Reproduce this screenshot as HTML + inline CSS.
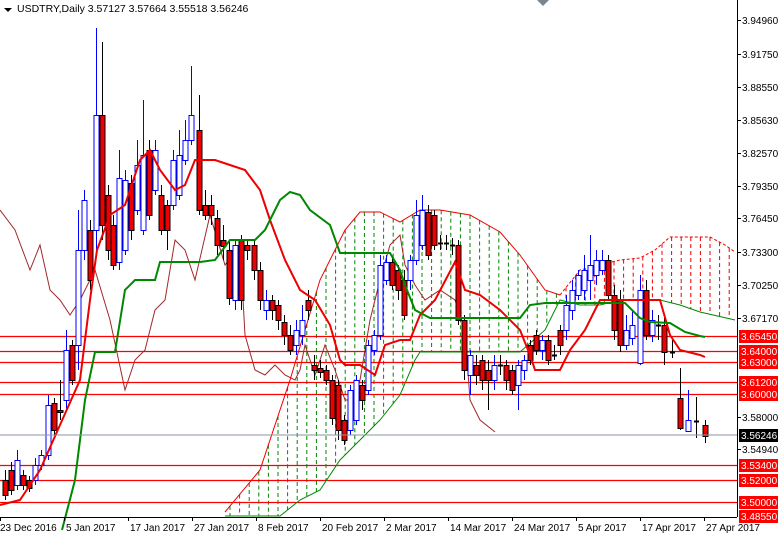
<!DOCTYPE html>
<html><head><meta charset="utf-8"><style>
html,body{margin:0;padding:0;background:#fff;width:778px;height:534px;overflow:hidden}
svg{display:block;font-family:"Liberation Sans",sans-serif}
</style></head><body>
<svg id="s" width="778" height="534" viewBox="0 0 778 534" xmlns="http://www.w3.org/2000/svg">
<rect width="778" height="534" fill="#fff"/>
<g id="cloud"></g>
<g id="hl"></g>
<polyline id="chik" fill="none" stroke="#a0282a" stroke-width="1" points="0,210 15,230 30,270 40,245 50,290 60,300 70,315 80,300 95,270 110,320 125,390 135,360 145,350 155,310 165,300 175,240 185,250 195,280 210,215 225,265 240,245 245,335 255,370 265,375 275,365 285,375 295,380 300,370 305,345 315,375 325,345 335,370 345,400 355,400 360,380 370,320 380,280 390,245 400,235 405,265 415,285 425,300 440,290 455,300 465,330 470,400 480,420 495,432"/>
<polyline fill="none" stroke="#e00" stroke-width="1" stroke-dasharray="3,2" points="560,295 580,270 600,265 620,260 640,258 655,250 670,237 710,237 725,245 735,252"/>
<polyline fill="none" stroke="#e00" stroke-width="1" points="225,512 260,470 290,380 320,280 345,230 360,212 380,212 400,222 420,210 440,210 470,215 500,232 520,255 545,290 560,295"/>
<polyline fill="none" stroke="#080" stroke-width="1" points="225,516 280,516 300,500 320,490 340,460 360,440 380,420 400,395 415,360 420,352 520,352 545,330 560,300 580,305 600,305 620,300 660,300 680,305 700,312 735,320"/>
<g id="cd"></g>
<polyline fill="none" stroke="#e00" stroke-width="2" points="0,505 20,500 40,470 60,425 80,380 90,300 97,250 110,215 125,205 140,160 150,150 160,170 175,190 185,185 195,160 215,160 230,165 245,170 260,190 270,220 285,260 300,290 315,300 330,325 340,360 345,365 360,365 375,375 385,345 400,340 410,340 420,315 435,300 455,262 465,290 480,295 500,310 520,330 530,355 535,370 560,370 570,350 585,330 600,300 660,300 670,335 680,350 700,355 705,357"/>
<polyline fill="none" stroke="#080" stroke-width="2" points="62,530 75,480 85,400 95,352 115,352 125,290 135,280 155,280 160,262 200,262 215,260 230,240 255,240 265,230 280,200 290,192 300,195 310,210 330,225 340,253 390,253 400,270 405,285 415,310 430,318 520,318 530,305 545,303 625,303 640,318 650,322 670,323 685,332 700,336 705,337"/>
<line x1="0" y1="435" x2="737" y2="435" stroke="#8a96a0" stroke-width="1"/>
<line x1="737.5" y1="0" x2="737.5" y2="517" stroke="#000"/>
<line x1="0" y1="517.5" x2="737" y2="517.5" stroke="#000"/>
<g id="ax" font-size="10" fill="#000"></g>
<path d="M4 8 L12 8 L8 12 Z" fill="#000"/>
<text x="17" y="12" font-size="10.5">USDTRY,Daily  3.57127 3.57664 3.55518 3.56246</text>
<path d="M537 0 L549 0 L543 6 Z" fill="#7a8590"/>
</svg>
<script>
var NS="http://www.w3.org/2000/svg",s=document.getElementById('s');
function el(p,t,a,txt){var e=document.createElementNS(NS,t);for(var k in a)e.setAttribute(k,a[k]);if(txt)e.textContent=txt;document.getElementById(p).appendChild(e);return e;}
function interp(pts,x){for(var i=0;i<pts.length-1;i++){if(x>=pts[i][0]&&x<=pts[i+1][0]){var t=(x-pts[i][0])/(pts[i+1][0]-pts[i][0]);return pts[i][1]+t*(pts[i+1][1]-pts[i][1]);}}return null;}
var gu=[[225,512],[260,470],[290,380],[320,280],[345,230],[360,212],[380,212],[400,222],[420,210],[440,210],[470,215],[500,232],[520,255],[545,290],[560,295]];
var gl=[[225,516],[280,516],[300,500],[320,490],[340,460],[360,440],[380,420],[400,395],[415,360],[420,352],[520,352],[545,330],[560,300]];
var ru=[[560,295],[580,270],[600,265],[620,260],[640,258],[655,250],[670,237],[710,237],[725,245],[735,252]];
var rl=[[560,300],[580,305],[600,305],[620,300],[660,300],[680,305],[700,312],[735,320]];
for(var x=230;x<735;x+=9.6){var a,b,c;if(x<560){a=interp(gu,x);b=interp(gl,x);c='#080';}else{a=interp(ru,x);b=interp(rl,x);c='#e00';}
if(a!=null&&b!=null)el('cloud','line',{x1:x,x2:x,y1:a,y2:Math.min(b,517),stroke:c,'stroke-dasharray':'4,3','stroke-width':1});}
// candles: x, open, close, high, low (y coords)
var C=[[5,480,495,470,500],[11,470,490,462,495],[17,485,460,450,490],[23,475,485,470,490],[29,480,488,476,492],[35,480,465,458,485],[41,465,455,450,470],[48,455,405,395,460],[54,403,430,398,435],[60,410,412,380,420],[66,400,350,330,410],[72,345,380,340,385],[78,345,250,210,370],[84,250,200,190,260],[90,230,280,220,290],[96,230,115,28,250],[102,115,225,42,240],[108,195,250,185,260],[113,225,265,215,270],[119,262,178,150,270],[125,250,180,170,255],[131,183,230,175,240],[137,210,165,140,215],[143,230,155,100,235],[149,150,215,140,220],[155,190,150,140,195],[161,195,230,185,235],[167,205,230,200,250],[173,205,160,150,210],[179,195,155,130,200],[185,160,140,120,165],[191,140,115,66,145],[199,130,210,95,215],[205,205,215,190,220],[211,205,215,195,225],[217,218,245,210,255],[223,240,246,225,260],[229,250,298,240,305],[235,300,245,240,310],[241,240,300,235,310],[247,245,250,240,260],[254,245,270,240,280],[260,270,300,262,310],[266,310,300,290,320],[272,300,310,295,320],[278,305,320,300,330],[284,322,335,315,345],[290,335,350,325,355],[296,345,330,320,355],[302,335,320,305,345],[308,300,310,290,320],[314,365,370,355,380],[320,368,372,360,378],[326,370,380,365,385],[332,380,418,375,425],[338,385,430,380,440],[344,420,440,415,445],[350,430,390,385,435],[356,420,380,375,425],[362,385,400,380,410],[368,390,345,340,395],[374,350,335,330,355],[380,335,265,255,340],[386,280,262,255,285],[392,262,285,258,290],[398,270,290,265,300],[404,280,315,270,320],[410,280,260,255,290],[416,260,215,200,265],[422,245,210,195,250],[428,212,255,205,260],[434,215,245,210,250],[440,243,244,235,250],[446,243,244,235,250],[452,245,246,238,255],[458,245,320,240,325],[464,320,370,315,380],[470,375,355,350,395],[476,365,375,355,385],[482,360,380,355,390],[488,370,380,360,410],[494,380,365,355,390],[500,365,366,355,375],[506,365,380,360,390],[512,370,390,365,395],[518,385,365,360,410],[524,370,360,355,380],[530,345,360,340,365],[536,335,350,330,355],[542,350,340,335,360],[548,340,360,335,365],[554,355,356,345,360],[560,330,345,325,355],[566,330,305,295,340],[572,310,290,280,320],[578,295,275,270,300],[584,290,270,255,300],[590,280,265,235,300],[596,275,260,250,285],[602,270,260,250,275],[608,260,295,255,300],[614,295,330,285,340],[620,300,345,290,352],[626,345,330,315,350],[632,338,325,310,345],[640,363,290,275,365],[646,290,335,280,340],[652,335,320,310,342],[658,325,326,315,340],[664,325,352,318,365],[672,352,353,340,358],[680,398,428,368,430],[688,431,420,390,432],[696,421,422,397,438],[705,425,436,420,443]];
C.forEach(function(c){var x=c[0],o=c[1],cl=c[2],h=c[3],l=c[4];var bull=cl<o,dj=Math.abs(o-cl)<2;
var col=dj?'#000':(bull?'#00f':'#000');
el('cd','line',{x1:x+0.5,x2:x+0.5,y1:h,y2:l,stroke:col,'stroke-width':1});
if(dj){el('cd','line',{x1:x-2,x2:x+3,y1:o+0.5,y2:o+0.5,stroke:'#000','stroke-width':2});}
else el('cd','rect',{x:x-2,y:Math.min(o,cl)+0.5,width:5,height:Math.abs(o-cl),fill:bull?'#fff':'#e00',stroke:col,'stroke-width':1});});
var HL=[[336,'3.65450'],[351,'3.64000'],[362,'3.63000'],[382,'3.61200'],[394,'3.60000'],[465,'3.53400'],[480,'3.52000'],[502,'3.50000'],[516,'3.48550']];
HL.forEach(function(h){if(h[0]<516)el('hl','line',{x1:0,x2:737,y1:h[0]+0.5,y2:h[0]+0.5,stroke:'#f00','stroke-width':1.3});
el('ax','rect',{x:739,y:h[0]-6,width:39,height:13,fill:'#f00'});el('ax','text',{x:741,y:h[0]+4,fill:'#fff'},h[1]);});
var L=[[20,'3.94960'],[54,'3.91750'],[87,'3.88550'],[120,'3.85630'],[153,'3.82570'],[186,'3.79350'],[218,'3.76450'],[252,'3.73300'],[285,'3.70250'],[318,'3.67170'],[417,'3.58000'],[449,'3.54940']];
L.forEach(function(h){el('ax','line',{x1:737,x2:741,y1:h[0]+0.5,y2:h[0]+0.5,stroke:'#000'});el('ax','text',{x:742,y:h[0]+4},h[1]);});
el('ax','rect',{x:739,y:429,width:39,height:13,fill:'#000'});el('ax','text',{x:741,y:439,fill:'#fff'},'3.56246');
var D=['23 Dec 2016','5 Jan 2017','17 Jan 2017','27 Jan 2017','8 Feb 2017','20 Feb 2017','2 Mar 2017','14 Mar 2017','24 Mar 2017','5 Apr 2017','17 Apr 2017','27 Apr 2017'];
D.forEach(function(d,i){var x=i*64;el('ax','line',{x1:x+0.5,x2:x+0.5,y1:517,y2:521,stroke:'#000'});el('ax','text',{x:x+(i?2:0),y:531},d);});
</script>
</body></html>
